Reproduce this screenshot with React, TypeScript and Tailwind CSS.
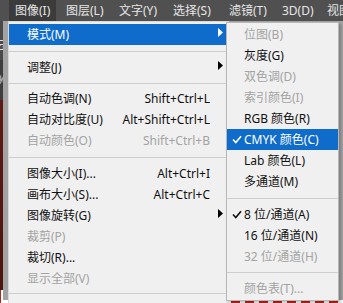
import React from 'react';

type MenuEntry =
  | { label: string; shortcut?: string; disabled?: boolean; sub?: boolean; active?: boolean; checked?: boolean }
  | { sep: string };

const mainItems: MenuEntry[] = [
  { label: '模式(M)', sub: true, active: true },
  { sep: 'h-[12px]' },
  { label: '调整(J)', sub: true },
  { sep: 'h-[10px]' },
  { label: '自动色调(N)', shortcut: 'Shift+Ctrl+L' },
  { label: '自动对比度(U)', shortcut: 'Alt+Shift+Ctrl+L' },
  { label: '自动颜色(O)', shortcut: 'Shift+Ctrl+B', disabled: true },
  { sep: 'h-[12px]' },
  { label: '图像大小(I)...', shortcut: 'Alt+Ctrl+I' },
  { label: '画布大小(S)...', shortcut: 'Alt+Ctrl+C' },
  { label: '图像旋转(G)', sub: true },
  { label: '裁剪(P)', disabled: true },
  { label: '裁切(R)...' },
  { label: '显示全部(V)', disabled: true },
  { sep: 'h-[9px]' },
];

const subItems: MenuEntry[] = [
  { label: '位图(B)', disabled: true },
  { label: '灰度(G)' },
  { label: '双色调(D)', disabled: true },
  { label: '索引颜色(I)', disabled: true },
  { label: 'RGB 颜色(R)' },
  { label: 'CMYK 颜色(C)', active: true, checked: true },
  { label: 'Lab 颜色(L)' },
  { label: '多通道(M)' },
  { sep: 'h-[12px]' },
  { label: '8 位/通道(A)', checked: true },
  { label: '16 位/通道(N)' },
  { label: '32 位/通道(H)', disabled: true },
  { sep: 'h-[11px]' },
  { label: '颜色表(T)...', disabled: true },
];

const menuBar = [
  { label: '图像(I)', w: 'w-[47px] pl-[6px]', active: true },
  { label: '图层(L)', w: 'w-[53px] pl-[10px]' },
  { label: '文字(Y)', w: 'w-[54px] pl-[10px]' },
  { label: '选择(S)', w: 'w-[56px] pl-[10px]' },
  { label: '滤镜(T)', w: 'w-[53px] pl-[10px]' },
  { label: '3D(D)', w: 'w-[45px] pl-[10px]' },
  { label: '视图(V)', w: 'w-[60px] pl-[10px]' },
];

const Arrow = ({ white }: { white?: boolean }) => (
  <svg width="5" height="9" viewBox="0 0 5 9" className="-mt-[4px]">
    <polygon points="0,0 5,4.5 0,9" fill={white ? '#ffffff' : '#000000'} />
  </svg>
);

const Check = ({ white }: { white?: boolean }) => (
  <svg width="10" height="9" viewBox="0 0 10 9">
    <polyline points="1,4.5 3.8,7.5 9,1.2" fill="none" stroke={white ? '#ffffff' : '#111111'} strokeWidth="1.6" />
  </svg>
);

const Separator = ({ h }: { h: string }) => (
  <div className={`${h} flex items-center`}>
    <div className="h-px w-full bg-[#cdcdcd]" />
  </div>
);

const rowColor = (e: { disabled?: boolean; active?: boolean }) =>
  e.active ? 'bg-[#0f6cca] text-white' : e.disabled ? 'text-[#a3a3a3]' : 'text-[#111111]';

const App: React.FC = () => {
  return (
    <div className="relative w-[343px] h-[303px] overflow-hidden bg-[#a3a3a3] font-['Noto_Sans','Noto_Sans_CJK_SC',sans-serif] text-[12px] leading-none">
      {/* Top menu bar */}
      <div className="h-[21px] bg-[#505050] flex text-[#e6e6e6] pl-[9px] whitespace-nowrap">
        {menuBar.map((m) => (
          <div key={m.label} className={`${m.w} shrink-0 flex items-center ${m.active ? 'bg-[#3b3b3b]' : ''}`}>
            {m.label}
          </div>
        ))}
      </div>

      {/* Background document area */}
      <div className="flex h-[282px]">
        <div className="w-[8px] flex flex-col overflow-hidden">
          <div className="h-[39px] bg-[#4a4a4a] flex items-center text-[#dddddd] pt-[10px]">
            <span className="block -ml-[5px]">云</span>
          </div>
          <div className="h-[40px] bg-[#3e3e3e] flex items-center text-[#cfcfcf]">
            <span className="block -ml-[3px]">%</span>
          </div>
          <div className="flex-1 bg-gradient-to-b from-[#5e1a13] to-[#4d1410]" />
          <div className="h-[13px] bg-[#b3221c] flex justify-end">
            <div className="w-[2px] bg-white" />
          </div>
        </div>
        <div className="flex-1 flex flex-col">
          <div className="flex-1 bg-[#a3a3a3]" />
          <div className="h-[3px] flex bg-white pl-[228px]">
            {[0, 1, 2, 3, 4, 5, 6, 7].map((i) => (
              <div key={i} className="w-[9px] mr-[5px] bg-[#c0241d]" />
            ))}
          </div>
        </div>
      </div>

      {/* Image menu */}
      <div className="absolute left-[8px] top-[21px] w-[221px] h-[290px] bg-[#f0f0f0] border-l border-t border-[#d9d9d9] pt-[2px] whitespace-nowrap">
        {mainItems.map((e, i) =>
          'sep' in e ? (
            <Separator key={i} h={e.sep} />
          ) : (
            <div key={i} className={`flex h-[21px] items-center pl-[18px] ${rowColor(e)}`}>
              <span className="flex-1">{e.label}</span>
              {e.shortcut && <span>{e.shortcut}</span>}
              <span className="w-[19px] shrink-0 flex items-center pl-[8px]">{e.sub && <Arrow white={e.active} />}</span>
            </div>
          )
        )}
      </div>

      {/* Mode submenu */}
      <div className="absolute left-[226px] top-[22px] w-[113px] bg-[#f0f0f0] border border-[#b8b8b8] py-[1px] whitespace-nowrap shadow-[2px_2px_3px_rgba(0,0,0,0.25)]">
        {subItems.map((e, i) =>
          'sep' in e ? (
            <Separator key={i} h={e.sep} />
          ) : (
            <div key={i} className={`flex h-[21px] items-center ${rowColor(e)}`}>
              <span className="w-[17px] shrink-0 flex items-center pl-[5px]">{e.checked && <Check white={e.active} />}</span>
              <span>{e.label}</span>
            </div>
          )
        )}
      </div>
    </div>
  );
};

export default App;
